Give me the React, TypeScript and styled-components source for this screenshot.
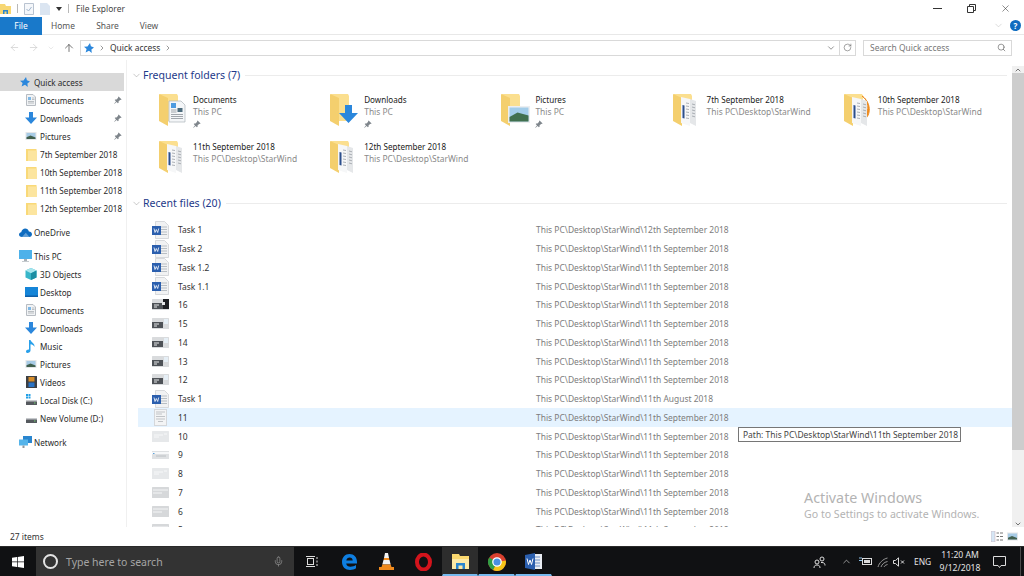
import React from 'react'
import styled, { createGlobalStyle } from 'styled-components'
import {
  ArrowLeft,
  ArrowRight,
  ArrowUp,
  ChevronDown,
  ChevronRight,
  ChevronUp,
  Mic,
  RotateCw,
  Search,
  X,
} from 'lucide-react'

const GlobalStyle = createGlobalStyle`
  html, body {
    margin: 0;
    padding: 0;
    background: #fff;
    overflow: hidden;
  }
  body {
    font-family: "Noto Sans", "Open Sans", "Liberation Sans", sans-serif;
    font-size: 8.45px;
    color: #222;
  }
  * { box-sizing: border-box; }
`

/* ---------- icons ---------- */

type FolderKind = 'docs' | 'downloads' | 'pictures' | 'papers' | 'orange'

const BlueArrow = ({ size = 12 }: { size?: number }) => (
  <svg width={size} height={size} viewBox="0 0 12 12">
    <path d="M4 0h4v5.5h4L6 12 0 5.5h4z" fill="#2b87dc" />
  </svg>
)

const PicThumb = ({ width = 12, height = 8 }: { width?: number; height?: number }) => (
  <svg width={width} height={height} viewBox="0 0 11 8">
    <rect x="0" y="0" width="11" height="8" fill="#e4e6e8" />
    <rect x="1" y="1" width="9" height="6" fill="#a7cbe6" />
    <path d="M1 5.2 5 3.4l5 2V7H1z" fill="#41604e" />
  </svg>
)

const DocGlyph = () => (
  <svg width="10" height="12" viewBox="0 0 10 12">
    <path d="M.5.5h6.5l2.5 2.500V11.500H.5z" fill="#f1f3f5" stroke="#b7bcc2" />
    <path d="M2 3h3v3H2z" fill="#7db7e6" />
    <path d="M2 7.500h6M2 9h6M6 4h2.500M6 5.500h2.500" stroke="#a2a8ae" strokeWidth=".7" />
  </svg>
)

const SmallFolder = () => (
  <svg width="11" height="13" viewBox="0 0 11 13">
    <path d="M0 1h10.500v12H0z" fill="#f9d978" />
    <path d="M2 2.500h9V13H2z" fill="#fce59f" />
  </svg>
)

const CubeIcon = () => (
  <svg width="12" height="12" viewBox="0 0 12 12">
    <path d="M6 0l5.500 2.600v6.800L6 12 .5 9.400V2.600z" fill="#38b6c9" />
    <path d="M6 0l5.500 2.600L6 5.200.5 2.600z" fill="#a8e6ee" />
    <path d="M6 5.200V12l5.500-2.600V2.600z" fill="#1c8ea3" />
  </svg>
)

const DesktopIcon = () => (
  <svg width="13" height="10" viewBox="0 0 13 10">
    <rect width="13" height="10" fill="#1585d8" />
    <rect y="8.500" width="13" height="1.500" fill="#0f5fa8" />
  </svg>
)

const NoteIcon = () => (
  <svg width="10" height="13" viewBox="0 0 10 13">
    <path d="M3 0h1.500c.5 2.500 4.500 3 4 7-.5-1.600-2-2.500-4-2.800V10.500C4.500 12 3 13 1.500 13 .5 13 0 12.400 0 11.500 0 10.200 1.500 9.300 3 9.500z" fill="#29a0ea" />
  </svg>
)

const VideoIcon = () => (
  <svg width="11" height="12" viewBox="0 0 11 12">
    <rect width="11" height="12" fill="#3c3f44" />
    <rect x="2.500" y="1" width="6" height="4.500" fill="#d68d2a" />
    <rect x="2.500" y="6.500" width="6" height="4.500" fill="#2a73c4" />
  </svg>
)

const DiskIcon = ({ system }: { system?: boolean }) => (
  <svg width="13" height="12" viewBox="0 0 13 12">
    {system && <path d="M1 0h2v2H1zM3.500 0h2v2h-2zM1 2.500h2v2H1zM3.500 2.500h2v2h-2z" fill="#22a0e6" />}
    <rect x="1" y="7" width="11" height="4" rx=".5" fill="#55595e" />
    <rect x="1" y="6" width="11" height="1.500" fill="#c7cacd" />
    <rect x="9" y="8.500" width="1.500" height="1" fill="#6fd06f" />
  </svg>
)

const CloudIcon = () => (
  <svg width="13" height="9" viewBox="0 0 13 9">
    <path d="M3 9C1 9 0 7.800 0 6.500 0 5.200 1 4.200 2.200 4.200 2.800 1.800 4.500.5 6.200.5 8 .5 9.400 1.700 9.900 3.400 11.700 3.400 13 4.600 13 6.200 13 7.800 11.800 9 10.200 9z" fill="#0f6cc0" />
    <path d="M3 9l3.800-4.200L10.500 9z" fill="#fff" opacity=".35" />
  </svg>
)

const MonitorIcon = () => (
  <svg width="13" height="12" viewBox="0 0 13 12">
    <rect width="13" height="9" fill="#4db1ea" />
    <rect x="5" y="9" width="3" height="2" fill="#a9b0b6" />
    <rect x="3" y="11" width="7" height="1" fill="#c6cbcf" />
  </svg>
)

const NetworkIcon = () => (
  <svg width="13" height="12" viewBox="0 0 13 12">
    <rect x="4" y="0" width="9" height="7" fill="#2a86cf" />
    <rect x="0" y="3.500" width="9" height="6" fill="#55b4ea" />
    <rect x="3.500" y="9.500" width="2" height="2.500" fill="#8f979e" />
  </svg>
)

const PinIcon = () => (
  <svg width="8" height="8" viewBox="0 0 8 8">
    <path d="M4.600.4l3 3-.8.600-.5-.2L4.500 5.500l.1 1.300-.7.500L2.600 6 .6 7.800.2 7.400 2 5.400.7 4.100l.5-.7 1.300.1 1.700-1.800-.2-.5z" fill="#7f868c" />
  </svg>
)

const StarIcon = () => (
  <svg width="10" height="10" viewBox="0 0 10 10">
    <path d="M6 0l.9 3.300L10 4.400 7.400 6.400 7.800 10 5 7.800 1.600 9.600 2.600 6 0 3.800l3.500-.3z" fill="#2b87dc" />
  </svg>
)

const FolderGlyph = ({ kind }: { kind: FolderKind }) => (
  <svg width="30" height="34" viewBox="0 0 30 34">
    <path d="M2 1h17l1 2v25H2z" fill="#fbdf8f" />
    <path d="M1 1l9 4v28l-9-5z" fill="#f4cf6e" />
    {kind === 'docs' && (
      <g>
        <path d="M11 8h12l4 4v17H11z" fill="#f4f6f8" stroke="#aeb4ba" strokeWidth=".7" />
        <path d="M13 10h5v5h-5z" fill="#4e9be0" />
        <path d="M19.500 15h5v4h-5z" fill="#4c6b7c" />
        <path d="M13 17h5.500M13 19h5.500M13 21.500h12M13 23.500h12M13 25.500h12" stroke="#8b9298" strokeWidth=".8" />
      </g>
    )}
    {kind === 'downloads' && <path d="M16 12h7v8h6L19.500 30 10 20h6z" fill="#2b87dc" />}
    {kind === 'pictures' && (
      <g>
        <rect x="8" y="13" width="22" height="17" fill="#eceef0" />
        <rect x="9.500" y="14.500" width="19" height="14" fill="#a3cde9" />
        <path d="M9.500 24l8-4.500 11 3v6H9.500z" fill="#41704f" />
      </g>
    )}
    {(kind === 'papers' || kind === 'orange') && (
      <g>
        {kind === 'orange' && <path d="M19 3c6 4 9 13 1 24 7-2 10-16-1-24z" fill="#ee8a1d" stroke="#ee8a1d" />}
        <path d="M18 6l6 2v25l-6-3z" fill="#e5e7e9" />
        <path d="M9 4l9 2v27l-9-3z" fill="#f6f7f8" />
        <path d="M10.500 12v13l2 .6V12.500z" fill="#2c4f8c" />
        <path d="M14 10l3 .5M14 13l3 .5M14 16l3 .5M14 19l3 .5M14 22l3 .5M14 25l3 .5M20 11l3 .8M20 14l3 .8M20 17l3 .8M20 20l3 .8M20 23l3 .8"
          stroke="#9aa0a6" strokeWidth=".8" />
      </g>
    )}
  </svg>
)

const WordFile = () => (
  <svg width="17" height="18" viewBox="0 0 17 18">
    <path d="M3.500.5h9l4 4v13h-13z" fill="#f1f2f3" stroke="#c9ccd0" strokeWidth=".7" />
    <path d="M9 6h6M9 8.500h6M9 11h6M9 13.500h6" stroke="#aab0b6" strokeWidth=".8" />
    <rect x="0" y="5" width="9" height="9" fill="#2b5fae" />
    <path d="M2 7.500l1 4 1.300-3 1.400 3 1-4" stroke="#fff" strokeWidth=".8" fill="none" />
  </svg>
)

type ThumbKind = 'dark' | 'mid' | 'paper' | 'light' | 'strip' | 'gray'

const ScreenThumb = ({ kind }: { kind: ThumbKind }) => {
  if (kind === 'paper') {
    return (
      <svg width="13" height="17" viewBox="0 0 13 17">
        <rect x=".5" y=".5" width="12" height="16" fill="#f3f4f5" stroke="#d5d7da" />
        <path d="M2 3h9M2 5h6M2 7.500h9M2 10h9M4 12.500h5" stroke="#c0c3c7" />
      </svg>
    )
  }
  if (kind === 'strip') {
    return (
      <svg width="17" height="8" viewBox="0 0 17 8">
        <rect width="17" height="8" fill="#dfe1e3" />
        <rect y="1" width="17" height="2" fill="#f7f8f9" />
        <rect x="1" y="2" width="1.500" height="1" fill="#5aa2dd" />
        <path d="M4 5h10" stroke="#bcc0c4" />
      </svg>
    )
  }
  const bg = kind === 'gray' ? '#d6d8da' : kind === 'light' ? '#e6e8ea' : '#d9dbdd'
  return (
    <svg width="17" height="11" viewBox="0 0 17 11">
      <rect width="17" height="11" rx=".5" fill={bg} />
      {(kind === 'dark' || kind === 'mid') && (
        <>
          <rect x="0" y="4" width="11" height="6" fill="#4e5257" />
          <path d="M2 6h5M2 8h3" stroke="#e5e7e9" />
        </>
      )}
      {kind === 'dark' && <rect x="11" y="0" width="6" height="10" fill="#1d1f23" />}
      {kind === 'dark' && <rect x="10" y="3" width="3" height="3" fill="#e6e8ea" />}
      {kind === 'mid' && <rect x="12" y="1" width="4" height="5" fill="#e6eff6" />}
      {kind === 'light' && <path d="M2 4h9M2 6h5M12 3h3" stroke="#f7f8f9" />}
      {kind === 'gray' && <path d="M1 3h15M1 6h9" stroke="#f4f5f6" />}
    </svg>
  )
}

/* ---------- data ---------- */

const pinned: { name: string; icon: React.ReactNode }[] = [
  { name: 'Documents', icon: <DocGlyph /> },
  { name: 'Downloads', icon: <BlueArrow /> },
  { name: 'Pictures', icon: <PicThumb /> },
]

const dated = ['7th September 2018', '10th September 2018', '11th September 2018', '12th September 2018']

const thisPc: { name: string; icon: React.ReactNode }[] = [
  { name: '3D Objects', icon: <CubeIcon /> },
  { name: 'Desktop', icon: <DesktopIcon /> },
  { name: 'Documents', icon: <DocGlyph /> },
  { name: 'Downloads', icon: <BlueArrow /> },
  { name: 'Music', icon: <NoteIcon /> },
  { name: 'Pictures', icon: <PicThumb /> },
  { name: 'Videos', icon: <VideoIcon /> },
  { name: 'Local Disk (C:)', icon: <DiskIcon system /> },
  { name: 'New Volume (D:)', icon: <DiskIcon /> },
]

const STARWIND = 'This PC\\Desktop\\StarWind'

const folders: { name: string; sub: string; kind: FolderKind; pin?: boolean }[] = [
  { name: 'Documents', sub: 'This PC', kind: 'docs', pin: true },
  { name: 'Downloads', sub: 'This PC', kind: 'downloads', pin: true },
  { name: 'Pictures', sub: 'This PC', kind: 'pictures', pin: true },
  { name: '7th September 2018', sub: STARWIND, kind: 'papers' },
  { name: '10th September 2018', sub: STARWIND, kind: 'orange' },
  { name: '11th September 2018', sub: STARWIND, kind: 'papers' },
  { name: '12th September 2018', sub: STARWIND, kind: 'papers' },
]

const P11 = `${STARWIND}\\11th September 2018`

const files: { name: string; path: string; thumb?: ThumbKind; active?: boolean }[] = [
  { name: 'Task 1', path: `${STARWIND}\\12th September 2018` },
  { name: 'Task 2', path: P11 },
  { name: 'Task 1.2', path: P11 },
  { name: 'Task 1.1', path: P11 },
  { name: '16', path: P11, thumb: 'dark' },
  { name: '15', path: P11, thumb: 'mid' },
  { name: '14', path: P11, thumb: 'mid' },
  { name: '13', path: P11, thumb: 'mid' },
  { name: '12', path: P11, thumb: 'mid' },
  { name: 'Task 1', path: `${STARWIND}\\11th August 2018` },
  { name: '11', path: P11, thumb: 'paper', active: true },
  { name: '10', path: P11, thumb: 'light' },
  { name: '9', path: P11, thumb: 'strip' },
  { name: '8', path: P11, thumb: 'light' },
  { name: '7', path: P11, thumb: 'gray' },
  { name: '6', path: P11, thumb: 'gray' },
  { name: '5', path: P11, thumb: 'gray' },
]

/* ---------- app ---------- */

export default function App() {
  return (
    <>
      <GlobalStyle />
      <Screen>
        <TitleBar>
          <QuickTools>
            <svg width="11" height="10" viewBox="0 0 11 10">
              <path d="M0 0h5l1 2h5v8H0z" fill="#f7d774" />
              <path d="M3 6h5v4H6.500V7.500h-2V10H3z" fill="#2a86cf" />
            </svg>
            <ToolDivider />
            <svg width="10" height="12" viewBox="0 0 10 12">
              <path d="M.5.500h9v11h-9z" fill="#f5f7fa" stroke="#b9c3d0" />
              <path d="M2.500 6l2 2 3-4" stroke="#9fb4cc" fill="none" />
            </svg>
            <svg width="10" height="12" viewBox="0 0 10 12">
              <path d="M0 0h7l3 3v9H0z" fill="#dbe5f1" />
            </svg>
            <DropCaret />
            <ToolDivider />
          </QuickTools>
          <WindowName>File Explorer</WindowName>
          <WindowButtons>
            <WindowButton>
              <svg width="9" height="9" viewBox="0 0 9 9"><path d="M0 4.500h9" stroke="#333" /></svg>
            </WindowButton>
            <WindowButton>
              <svg width="9" height="9" viewBox="0 0 9 9">
                <path d="M2.500 2V.5h6v6H7" fill="none" stroke="#333" />
                <path d="M.5 2.500h6v6h-6z" fill="none" stroke="#333" />
              </svg>
            </WindowButton>
            <WindowButton>
              <X size={11} strokeWidth={1.2} color="#333" />
            </WindowButton>
          </WindowButtons>
        </TitleBar>

        <RibbonTabs>
          <FileTab>File</FileTab>
          <RibbonTab $width={42}>Home</RibbonTab>
          <RibbonTab $width={47}>Share</RibbonTab>
          <RibbonTab $width={36}>View</RibbonTab>
          <RibbonEnd>
            <ChevronDown size={11} strokeWidth={1} color="#b5b5b5" />
            <HelpDot>?</HelpDot>
          </RibbonEnd>
        </RibbonTabs>

        <NavBar>
          <NavArrows>
            <ArrowLeft size={11} strokeWidth={1.4} color="#c9c9c9" />
            <ArrowRight size={11} strokeWidth={1.4} color="#c9c9c9" />
            <ChevronDown size={8} strokeWidth={1.2} color="#c9c9c9" />
            <ArrowUp size={12} strokeWidth={1.6} color="#555" />
          </NavArrows>
          <AddressBox>
            <StarIcon />
            <ChevronRight size={8} color="#666" />
            <span>Quick access</span>
            <ChevronRight size={8} color="#666" />
            <AddressEnd>
              <ChevronDown size={10} strokeWidth={1.5} color="#555" />
              <AddressDivider />
              <RotateCw size={9} strokeWidth={1.4} color="#555" />
            </AddressEnd>
          </AddressBox>
          <SearchBox>
            <span>Search Quick access</span>
            <Search size={9} strokeWidth={1.6} color="#555" />
          </SearchBox>
        </NavBar>

        <Main>
          <Sidebar>
            <SideGroup>
              <SideRow $active $level={0}>
                <SideIcon $level={0}><StarIcon /></SideIcon>
                Quick access
              </SideRow>
              {pinned.map((item) => (
                <SideRow key={item.name} $level={1}>
                  <SideIcon $level={1}>{item.icon}</SideIcon>
                  {item.name}
                  <SidePin><PinIcon /></SidePin>
                </SideRow>
              ))}
              {dated.map((name) => (
                <SideRow key={name} $level={1}>
                  <SideIcon $level={1}><SmallFolder /></SideIcon>
                  {name}
                </SideRow>
              ))}
            </SideGroup>
            <SideGroup>
              <SideRow $level={0}>
                <SideIcon $level={0}><CloudIcon /></SideIcon>
                OneDrive
              </SideRow>
            </SideGroup>
            <SideGroup>
              <SideRow $level={0}>
                <SideIcon $level={0}><MonitorIcon /></SideIcon>
                This PC
              </SideRow>
              {thisPc.map((item) => (
                <SideRow key={item.name} $level={1}>
                  <SideIcon $level={1}>{item.icon}</SideIcon>
                  {item.name}
                </SideRow>
              ))}
            </SideGroup>
            <SideGroup>
              <SideRow $level={0}>
                <SideIcon $level={0}><NetworkIcon /></SideIcon>
                Network
              </SideRow>
            </SideGroup>
          </Sidebar>

          <Content>
            <SectionHead>
              <ChevronDown size={11} strokeWidth={1} color="#8a8a8a" />
              <SectionTitle>Frequent folders (7)</SectionTitle>
              <SectionLine />
            </SectionHead>
            <FolderGrid>
              {folders.map((f) => (
                <FolderTile key={f.name}>
                  <FolderGlyph kind={f.kind} />
                  <TileText>
                    <TileName>{f.name}</TileName>
                    <TileSub>{f.sub}</TileSub>
                    {f.pin && <TilePin><PinIcon /></TilePin>}
                  </TileText>
                </FolderTile>
              ))}
            </FolderGrid>

            <RecentHead>
              <ChevronDown size={11} strokeWidth={1} color="#8a8a8a" />
              <SectionTitle>Recent files (20)</SectionTitle>
              <SectionLine />
            </RecentHead>
            <FileList>
              {files.map((f, i) => (
                <FileRow key={i} $active={f.active}>
                  <FileIcon>{f.thumb ? <ScreenThumb kind={f.thumb} /> : <WordFile />}</FileIcon>
                  <FileName>{f.name}</FileName>
                  <FilePath>{f.path}</FilePath>
                </FileRow>
              ))}
            </FileList>
          </Content>

          <Scrollbar>
            <ScrollArrow><ChevronUp size={8} strokeWidth={2.4} color="#555" /></ScrollArrow>
            <ScrollThumb />
            <ScrollArrow><ChevronDown size={8} strokeWidth={2.4} color="#555" /></ScrollArrow>
          </Scrollbar>

          <PathTip>Path: This PC\Desktop\StarWind\11th September 2018</PathTip>
          <Watermark>
            <WatermarkTitle>Activate Windows</WatermarkTitle>
            <span>Go to Settings to activate Windows.</span>
          </Watermark>
        </Main>

        <StatusBar>
          <StatusCount>27 items</StatusCount>
          <ViewButtons>
            <svg width="12" height="11" viewBox="0 0 12 11">
              <rect x="0" y="0" width="4" height="11" fill="#d5e6f5" stroke="#c9a9b0" strokeWidth=".5" />
              <path d="M5.500 2H8M9 2h3M5.500 5.500H8M9 5.500h3M5.500 9H8M9 9h3" stroke="#777" />
            </svg>
            <PicThumb width={11} height={9} />
          </ViewButtons>
        </StatusBar>

        <Taskbar>
          <StartButton>
            <svg width="12" height="12" viewBox="0 0 12 12">
              <path d="M0 1.700 5 1v4.600H0zM5.700.9 12 0v5.600H5.700zM0 6.300h5V11l-5-.7zM5.700 6.300H12V12l-6.300-.9z" fill="#fff" />
            </svg>
          </StartButton>
          <TaskSearch>
            <CortanaRing />
            <TaskSearchText>Type here to search</TaskSearchText>
            <Mic size={11} strokeWidth={1.3} color="#a8a8a8" />
          </TaskSearch>
          <TaskSlot $width={36}>
            <svg width="12" height="11" viewBox="0 0 12 11">
              <path d="M0 .5h9M0 10.500h9" stroke="#ddd" />
              <rect x="1.500" y="2.500" width="6" height="6" fill="none" stroke="#ddd" />
              <path d="M11 1v2M11 4.500v2M11 8v2" stroke="#ddd" />
            </svg>
          </TaskSlot>
          <TaskApps>
            <TaskSlot $width={37}>
              <svg width="15" height="16" viewBox="0 0 15 16">
                <path d="M7.500 0C3 0 0 3.500 0 8c0 5 3.500 8 8 8 2.500 0 4.500-.7 6-1.700v-3.300c-1.500 1-3.500 1.700-5.500 1.700-2.300 0-4-1.100-4.300-3.200H15V8C15 3 12 0 7.500 0zM4.300 6.500C4.600 4.600 6 3.500 7.700 3.500c1.700 0 3 1.100 3 3z" fill="#0e7ee0" />
              </svg>
            </TaskSlot>
            <TaskSlot $width={37}>
              <svg width="15" height="17" viewBox="0 0 15 17">
                <path d="M6 0h3l1 5H5zM4.500 7h6l1.200 4.500H3.300z" fill="#f2f2f2" />
                <path d="M5 5h5l.5 2h-6zM3.300 11.500h8.400L12.500 14h-10z" fill="#f08a1d" />
                <path d="M0 14h15v3H0z" fill="#f08a1d" />
              </svg>
            </TaskSlot>
            <TaskSlot $width={37}>
              <svg width="17" height="18" viewBox="0 0 17 18">
                <ellipse cx="8.500" cy="9" rx="6.500" ry="7.500" fill="none" stroke="#d3141c" strokeWidth="4" />
              </svg>
            </TaskSlot>
            <TaskSlot $width={36} $open $current>
              <svg width="17" height="15" viewBox="0 0 17 15">
                <path d="M0 0h7l1 2h9v13H0z" fill="#fbd96f" />
                <path d="M0 5h17v10H0z" fill="#fde9a6" />
                <path d="M4 9h9v6h-2.500v-3.500h-4V15H4z" fill="#2a86cf" />
              </svg>
            </TaskSlot>
            <TaskSlot $width={37} $open>
              <svg width="18" height="18" viewBox="0 0 18 18">
                <circle cx="9" cy="9" r="9" fill="#d9402f" />
                <path d="M9 9 17.800 7.500A9 9 0 0 1 9 18 9 9 0 0 1 5 17z" fill="#f5c518" />
                <path d="M9 9 5 17A9 9 0 0 1 1.200 4.500z" fill="#2f9e44" />
                <circle cx="9" cy="9" r="4.200" fill="#4a90e2" stroke="#fff" strokeWidth="1.300" />
              </svg>
            </TaskSlot>
            <TaskSlot $width={37} $open>
              <svg width="17" height="17" viewBox="0 0 17 17">
                <rect x="7" y="1" width="10" height="15" fill="#e9edf3" />
                <path d="M10 4h5M10 7h5M10 10h5M10 13h5" stroke="#6d8fc4" />
                <path d="M0 2l10-2v17L0 15z" fill="#2b5fae" />
                <path d="M2 5.500l1.500 6L5 7l1.500 4.500 1.500-6" stroke="#fff" strokeWidth="1" fill="none" />
              </svg>
            </TaskSlot>
          </TaskApps>

          <Tray>
            <TrayGlyph $width={36}>
              <svg width="13" height="12" viewBox="0 0 13 12">
                <circle cx="9" cy="3" r="2" fill="none" stroke="#ddd" />
                <circle cx="4" cy="6" r="2" fill="none" stroke="#ddd" />
                <path d="M1 12c0-2 1-3 3-3s3 1 3 3M8 6.500h1c2 0 3 1 3 3" fill="none" stroke="#ddd" />
              </svg>
            </TrayGlyph>
            <TrayGlyph $width={18}>
              <ChevronUp size={11} strokeWidth={1.4} color="#ddd" />
            </TrayGlyph>
            <TrayGlyph $width={20}>
              <svg width="13" height="9" viewBox="0 0 13 9">
                <rect x="3.500" y="1.500" width="9" height="6" fill="none" stroke="#ddd" />
                <rect x="5" y="3" width="6" height="3" fill="#ddd" />
                <path d="M0 1h3M0 3.500h3" stroke="#8fc4ec" />
              </svg>
            </TrayGlyph>
            <TrayGlyph $width={15}>
              <svg width="11" height="10" viewBox="0 0 11 10">
                <path d="M1 10C2 6 6 2 10.500 1M4 10c.8-2.500 3-4.800 6.500-5.500M7 10c.5-1 1.500-2 3.500-2.500" fill="none" stroke="#999" />
              </svg>
            </TrayGlyph>
            <TrayGlyph $width={18}>
              <svg width="12" height="10" viewBox="0 0 12 10">
                <path d="M.5 3.500h2L5.500.8v8.400L2.500 6.500h-2z" fill="none" stroke="#ddd" />
                <path d="M8 3.500l3 3M11 3.500l-3 3" stroke="#ddd" />
              </svg>
            </TrayGlyph>
            <TrayText>ENG</TrayText>
            <Clock>
              <span>11:20 AM</span>
              <span>9/12/2018</span>
            </Clock>
            <ActionCenter>
              <svg width="13" height="12" viewBox="0 0 13 12">
                <path d="M.5.500h12v9H8L6.500 11.500 5 9.500H.5z" fill="none" stroke="#ddd" />
              </svg>
            </ActionCenter>
            <ShowDesktop />
          </Tray>
        </Taskbar>
      </Screen>
    </>
  )
}

/* ---------- layout ---------- */

const Screen = styled.div`
  width: 1024px;
  height: 576px;
  display: flex;
  flex-direction: column;
  overflow: hidden;
  background: #fff;
`

const TitleBar = styled.div`
  height: 17px;
  display: flex;
  align-items: center;
  flex: none;
`

const QuickTools = styled.div`
  display: flex;
  align-items: center;
  width: 76px;
  gap: 6px;
  padding-left: 0;
`

const ToolDivider = styled.div`
  width: 1px;
  height: 9px;
  background: #b8b8b8;
`

const DropCaret = styled.div`
  width: 0;
  height: 0;
  border-left: 3px solid transparent;
  border-right: 3px solid transparent;
  border-top: 4px solid #333;
`

const WindowName = styled.div`
  color: #444;
`

const WindowButtons = styled.div`
  margin-left: auto;
  display: flex;
`

const WindowButton = styled.div`
  width: 34px;
  height: 17px;
  display: flex;
  align-items: center;
  justify-content: center;
  position: relative;
  right: 2px;
`

const RibbonTabs = styled.div`
  height: 18px;
  display: flex;
  align-items: center;
  border-bottom: 1px solid #e8e8e8;
  flex: none;
`

const FileTab = styled.div`
  width: 42px;
  height: 18px;
  background: #1979ca;
  color: #fff;
  display: flex;
  align-items: center;
  justify-content: center;
`

const RibbonTab = styled.div<{ $width: number }>`
  width: ${(p) => p.$width}px;
  text-align: center;
  color: #555;
`

const RibbonEnd = styled.div`
  margin-left: auto;
  display: flex;
  align-items: center;
  gap: 6px;
  padding-right: 3px;
`

const HelpDot = styled.div`
  width: 11px;
  height: 11px;
  border-radius: 50%;
  background: #0f6cc0;
  color: #fff;
  font-size: 8px;
  font-weight: 700;
  line-height: 11px;
  text-align: center;
`

const NavBar = styled.div`
  height: 25px;
  display: flex;
  align-items: center;
  flex: none;
  padding-right: 12px;
`

const NavArrows = styled.div`
  width: 80px;
  padding: 0 5px 0 9px;
  display: flex;
  align-items: center;
  justify-content: space-between;
`

const AddressBox = styled.div`
  width: 776px;
  height: 16px;
  border: 1px solid #d9d9d9;
  display: flex;
  align-items: center;
  gap: 4px;
  padding: 0 3px;
  color: #333;
`

const AddressEnd = styled.div`
  margin-left: auto;
  display: flex;
  align-items: center;
  gap: 3px;
`

const AddressDivider = styled.div`
  width: 1px;
  height: 14px;
  background: #d9d9d9;
`

const SearchBox = styled.div`
  margin-left: 7px;
  flex: 1;
  height: 16px;
  border: 1px solid #d9d9d9;
  display: flex;
  align-items: center;
  justify-content: space-between;
  padding: 0 5px 0 6px;
  color: #777;
`

const Main = styled.div`
  flex: 1;
  min-height: 0;
  display: flex;
  position: relative;
`

const Sidebar = styled.div`
  width: 127px;
  flex: none;
  border-right: 1px solid #f0f0f0;
  padding-top: 13px;
  display: flex;
  flex-direction: column;
  gap: 6px;
  font-size: 8.15px;
`

const SideGroup = styled.div`
  display: flex;
  flex-direction: column;
`

const SideRow = styled.div<{ $active?: boolean; $level: number }>`
  height: 18px;
  width: 124px;
  display: flex;
  align-items: center;
  position: relative;
  white-space: nowrap;
  color: #2b2b2b;
  padding-left: ${(p) => (p.$level ? 40 : 34)}px;
  background: ${(p) => (p.$active ? '#d9d9d9' : 'transparent')};
`

const SideIcon = styled.span<{ $level: number }>`
  position: absolute;
  left: ${(p) => (p.$level ? 24 : 18)}px;
  width: 14px;
  display: flex;
  justify-content: center;
`

const SidePin = styled.span`
  position: absolute;
  left: 114px;
  display: flex;
`

const Content = styled.div`
  flex: 1;
  min-width: 0;
  padding-top: 7px;
  overflow: hidden;
  display: flex;
  flex-direction: column;
`

const SectionHead = styled.div`
  height: 16px;
  flex: none;
  display: flex;
  align-items: center;
  padding: 0 5px 0 4px;
  gap: 1px;
`

const RecentHead = styled(SectionHead)`
  margin-top: 8px;
`

const SectionTitle = styled.div`
  color: #1e3a8a;
  font-size: 10.55px;
  white-space: nowrap;
`

const SectionLine = styled.div`
  flex: 1;
  height: 1px;
  background: #ececec;
  margin-left: 4px;
`

const FolderGrid = styled.div`
  margin-top: 10px;
  padding-left: 31px;
  display: grid;
  grid-template-columns: repeat(5, 171.2px);
  grid-auto-rows: 47px;
  flex: none;
`

const FolderTile = styled.div`
  display: flex;
  gap: 5px;
`

const TileText = styled.div`
  display: flex;
  flex-direction: column;
  line-height: 12px;
  padding-top: 1px;
`

const TileName = styled.div`
  color: #222;
  font-size: 8.1px;
  white-space: nowrap;
`

const TileSub = styled.div`
  color: #8a8a8a;
  white-space: nowrap;
`

const TilePin = styled.div`
  margin-top: 2px;
  display: flex;
`

const FileList = styled.div`
  margin-top: 9.5px;
  padding-left: 11px;
  flex: none;
`

const FileRow = styled.div<{ $active?: boolean }>`
  height: 18.75px;
  display: flex;
  align-items: center;
  background: ${(p) => (p.$active ? '#e5f3ff' : 'transparent')};
`

const FileIcon = styled.div`
  width: 40px;
  padding: 0 9px 0 14px;
  display: flex;
  justify-content: center;
`

const FileName = styled.div`
  width: 358px;
  color: #333;
`

const FilePath = styled.div`
  color: #7d7d7d;
`

const Scrollbar = styled.div`
  width: 12px;
  flex: none;
  margin-top: 6px;
  background: #f0f0f0;
  display: flex;
  flex-direction: column;
`

const ScrollArrow = styled.div`
  height: 7px;
  flex: none;
  display: flex;
  align-items: center;
  justify-content: center;
`

const ScrollThumb = styled.div`
  height: 377px;
  background: #cdcdcd;
  margin-bottom: auto;
`

const PathTip = styled.div`
  position: absolute;
  left: 738px;
  top: 367px;
  height: 15px;
  width: 223px;
  background: #fff;
  border: 1px solid #767676;
  color: #444;
  padding-left: 4px;
  line-height: 13px;
  white-space: nowrap;
`

const Watermark = styled.div`
  position: absolute;
  left: 804px;
  top: 428px;
  display: flex;
  flex-direction: column;
  color: #b3b3b3;
  font-size: 10.6px;
  line-height: 14px;
`

const WatermarkTitle = styled.span`
  font-size: 14.3px;
  line-height: 19px;
`

const StatusBar = styled.div`
  height: 19px;
  flex: none;
  display: flex;
  align-items: center;
  justify-content: space-between;
  padding: 0 6px 0 10px;
`

const StatusCount = styled.div`
  color: #333;
`

const ViewButtons = styled.div`
  display: flex;
  align-items: center;
  gap: 4px;
`

const Taskbar = styled.div`
  height: 30px;
  flex: none;
  background: #101113;
  display: flex;
  align-items: center;
  border-top: 1px solid #2a2a2a;
`

const StartButton = styled.div`
  width: 36px;
  display: flex;
  justify-content: center;
`

const TaskSearch = styled.div`
  width: 258px;
  height: 100%;
  background: #333;
  display: flex;
  align-items: center;
  padding: 0 10px 0 7px;
`

const CortanaRing = styled.div`
  width: 15px;
  height: 15px;
  border: 2px solid #e3e3e3;
  border-radius: 50%;
`

const TaskSearchText = styled.div`
  flex: 1;
  margin-left: 8px;
  color: #a5a5a5;
  font-size: 10.5px;
`

const TaskApps = styled.div`
  display: flex;
  height: 100%;
  margin-left: 1px;
  gap: 0;
`

const TaskSlot = styled.div<{ $width: number; $open?: boolean; $current?: boolean }>`
  width: ${(p) => p.$width}px;
  height: 100%;
  display: flex;
  align-items: center;
  justify-content: center;
  background: ${(p) => (p.$current ? '#2d2d2d' : 'transparent')};
  border-bottom: 2px solid ${(p) => (p.$open ? '#76b9ed' : 'transparent')};
  border-left: 1px solid transparent;
  border-right: 1px solid transparent;
  padding-top: 2px;
`

const Tray = styled.div`
  margin-left: auto;
  height: 100%;
  display: flex;
  align-items: center;
  color: #e4e4e4;
`

const TrayGlyph = styled.div<{ $width: number }>`
  width: ${(p) => p.$width}px;
  display: flex;
  justify-content: center;
`

const TrayText = styled.div`
  margin-left: 6px;
  width: 22px;
`

const Clock = styled.div`
  width: 48px;
  display: flex;
  flex-direction: column;
  align-items: center;
  line-height: 13px;
  font-size: 8.6px;
`

const ActionCenter = styled.div`
  width: 24px;
  margin-left: 3px;
  display: flex;
  justify-content: center;
`

const ShowDesktop = styled.div`
  width: 1px;
  height: 100%;
  background: #4a4a4a;
  margin: 0 3px 0 9px;
`
